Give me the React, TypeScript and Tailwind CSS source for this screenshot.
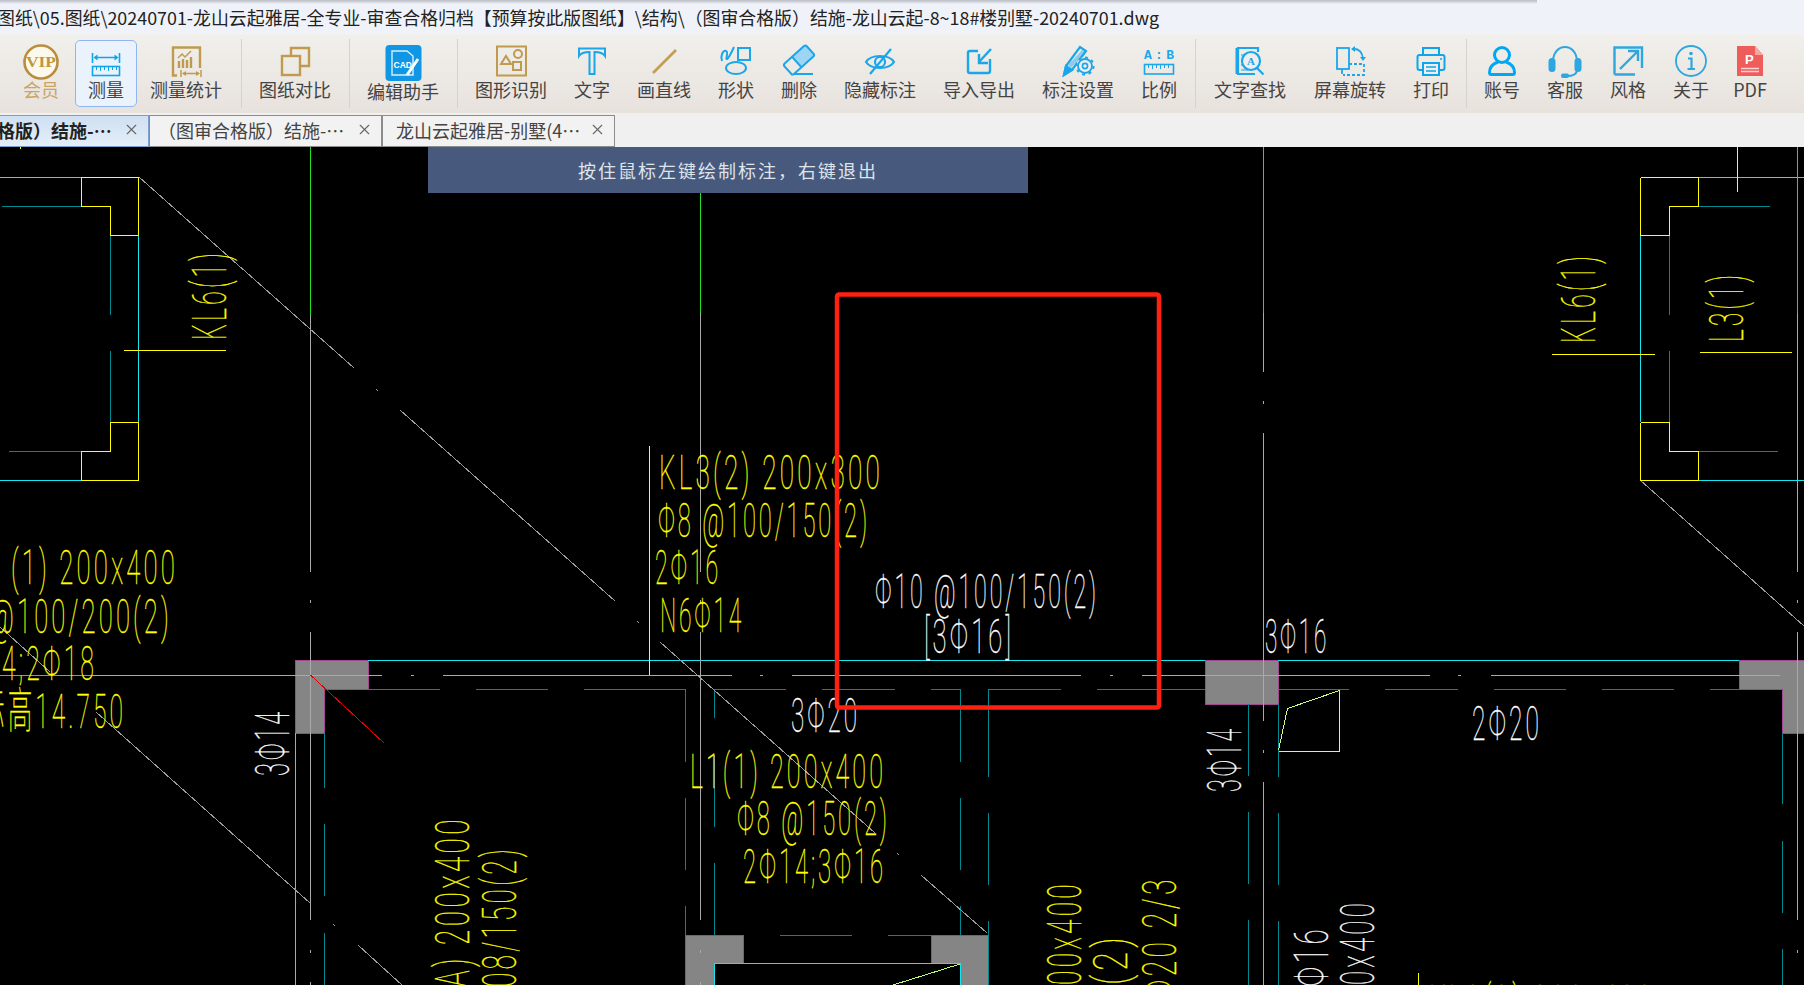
import React from "react";
import { X } from "lucide-react";

const GOLD = "#bf9a4f";
const BLUE = "#1ba6ea";
const CJK = "font-['Noto_Sans_CJK_SC','Liberation_Sans',sans-serif]";

function Icon({ children }: { children: React.ReactNode }) {
  return (
    <svg width="40" height="40" viewBox="0 0 40 40" fill="none" className="shrink-0">
      {children}
    </svg>
  );
}

const icons: Record<string, React.ReactNode> = {
  vip: (
    <>
      <circle cx="20" cy="21" r="16.5" stroke="#b98d3c" strokeWidth="2.6" fill="#fdf8ec" />
      <text x="20" y="26" textAnchor="middle" textLength="30" lengthAdjust="spacingAndGlyphs" fontFamily="Liberation Serif" fontWeight="700" fontSize="15" fill="#c0963e">VIP</text>
    </>
  ),
  measure: (
    <g stroke="#0fa5ea" strokeWidth="1.6">
      <path d="M6.5 12V22M33.5 12V22M9 16.5H31" />
      <path d="M7.5 16.5l4-3v6zM32.5 16.5l-4-3v6z" fill="#0fa5ea" stroke="none" />
      <rect x="6.5" y="25.5" width="27" height="9" />
      <path d="M10.5 26v3M14.5 26v4M18.5 26v3M22.5 26v4M26.5 26v3M30.5 26v3" strokeWidth="1" />
    </g>
  ),
  stats: (
    <g stroke={GOLD}>
      <path d="M34 27V6.5H7V34.5H11" strokeWidth="2.4" />
      <path d="M12 17l4-4 3 3 6-6" strokeWidth="1.5" />
      <path d="M13 20v7M17 18v9M21 19v8M25 16v11" strokeWidth="2.4" />
      <path d="M15 29v7M35 29v7M17 32.5H33" strokeWidth="1.5" />
      <path d="M16 32.5l4-2.5v5zM34 32.5l-4-2.5v5z" fill={GOLD} stroke="none" />
    </g>
  ),
  compare: (
    <g stroke={GOLD} strokeWidth="2.4">
      <path d="M16 14V7H34V25H25" />
      <rect x="7" y="15" width="18" height="19" />
    </g>
  ),
  cad: (
    <>
      <rect x="2.5" y="4" width="36" height="36" rx="4" fill="#0f97e6" />
      <path d="M9 10H24L30 15V34H9Z" stroke="#d9effc" strokeWidth="1.4" />
      <text x="10.5" y="27" fontFamily="Liberation Sans" fontWeight="700" fontSize="8.5" fill="#fff">CAD</text>
      <path d="M24 34L35 18" stroke="#fff" strokeWidth="3" />
    </>
  ),
  shapes: (
    <g stroke={GOLD} strokeWidth="2">
      <rect x="6" y="5.5" width="29" height="29" />
      <path d="M10 23l5-8 5 8z" />
      <circle cx="27" cy="13" r="4" />
      <rect x="22" y="21" width="8" height="8" />
    </g>
  ),
  text: <path d="M7 15V7.5H33V15C31 12 27 11 22.5 11V33H17.5V11C13 11 9 12 7 15Z" stroke={BLUE} strokeWidth="2" />,
  line: <path d="M9 32L32 9" stroke="#c29d52" strokeWidth="2.6" />,
  shape: (
    <g stroke={BLUE} strokeWidth="2">
      <ellipse cx="20" cy="27" rx="10" ry="6" />
      <rect x="22" y="7" width="12" height="12" />
      <path d="M6 20c-2-5 1-11 4-10s-1 9 1 8 7-12 7-12" />
    </g>
  ),
  eraser: (
    <g stroke={BLUE} strokeWidth="2">
      <g transform="rotate(-42 20 19)">
        <rect x="17" y="12" width="18" height="14" fill="#9ed5f4" stroke="none" />
        <rect x="5" y="12" width="30" height="14" rx="2" />
        <path d="M17 12V26" />
      </g>
      <path d="M15 33H34" />
    </g>
  ),
  eye: (
    <g stroke={BLUE} strokeWidth="2.2">
      <path d="M6 21C11 13 29 13 34 21C29 29 11 29 6 21Z" />
      <circle cx="20" cy="21" r="5" />
      <path d="M10 33L31 8" />
    </g>
  ),
  io: (
    <g stroke={BLUE} strokeWidth="2.4">
      <path d="M19 10H11a2 2 0 0 0-2 2V30a2 2 0 0 0 2 2H29a2 2 0 0 0 2-2V18" />
      <path d="M32 8L20 21M20 13V22H29" />
    </g>
  ),
  pen: (
    <g stroke={BLUE} strokeWidth="2.2">
      <path d="M6 34l2-9L22 6l6 4L14 29Z" />
      <path d="M6 34l2-9 6 4Z" fill={BLUE} />
      <path d="M10 24L24 9l3 2L13 27Z" fill={BLUE} stroke="none" opacity="0.45" />
      <circle cx="27" cy="25" r="9" fill="#eee" stroke="none" />
      <circle cx="27" cy="25" r="7" strokeWidth="1.8" />
      <circle cx="27" cy="25" r="8.6" strokeWidth="2" strokeDasharray="3 3.7" />
      <circle cx="27" cy="25" r="2.6" strokeWidth="1.6" />
    </g>
  ),
  ratio: (
    <g>
      <text x="20" y="18" textAnchor="middle" textLength="30" lengthAdjust="spacing" fontFamily="Liberation Mono" fontWeight="700" fontSize="13" fill={BLUE}>A:B</text>
      <rect x="5.5" y="23.5" width="29" height="9.5" stroke={BLUE} strokeWidth="1.6" />
      <path d="M9.5 24v3M13.5 24v4M17.5 24v3M21.5 24v4M25.5 24v3M29.5 24v3" stroke={BLUE} />
    </g>
  ),
  find: (
    <g stroke={BLUE} strokeWidth="2.2">
      <path d="M28 11V7H8V33H25" />
      <path d="M7 7V33" strokeWidth="3" />
      <circle cx="21" cy="20" r="9" fill="#eee" />
      <path d="M27 27l6.500 6.500" />
      <path d="M11 14h3M11 19h2M11 24h2M11 29h8" strokeWidth="1.2" />
      <text x="21" y="24" textAnchor="middle" fontFamily="Liberation Serif" fontWeight="700" fontSize="11" fill={BLUE} stroke="none">A</text>
    </g>
  ),
  rotate: (
    <g stroke={BLUE} strokeWidth="1.8">
      <rect x="7" y="7" width="12" height="21" />
      <path d="M12 28v5" />
      <path d="M19 23H34V34H13" strokeDasharray="3 2" />
      <path d="M24 8C29 8 32 11 33 17" />
      <path d="M21 8l4-3v6zM33 20l-3-4h6z" fill={BLUE} stroke="none" />
    </g>
  ),
  print: (
    <g stroke="#0fa5ea" strokeWidth="2">
      <path d="M12 14V7H28V14" />
      <rect x="6.500" y="14" width="27" height="15" rx="2" />
      <rect x="12" y="22" width="16" height="12" fill="#eee" />
      <path d="M15 26H25M15 30H25" strokeWidth="1.4" />
      <circle cx="30" cy="18" r="1" fill="#0fa5ea" stroke="none" />
    </g>
  ),
  user: (
    <g stroke="#00a8f4" strokeWidth="3">
      <circle cx="20" cy="14" r="7.500" />
      <path d="M16 21C10 23 7.500 27 7.500 31.500C7.500 33 8.500 33.500 9.500 33.500H30.500C31.500 33.500 32.500 33 32.500 31.500C32.500 27 30 23 24 21" />
    </g>
  ),
  headset: (
    <g stroke="#2ea6e0" strokeWidth="2">
      <path d="M8 21C8 1 32 1 32 21" />
      <rect x="4.500" y="18" width="5" height="12" rx="2.500" fill="#2ea6e0" />
      <rect x="30.500" y="18" width="5" height="12" rx="2.500" fill="#2ea6e0" />
      <path d="M32 30C31 34 27 35 22 35" />
      <rect x="17" y="33.500" width="6" height="2.500" rx="1" fill="#2ea6e0" />
    </g>
  ),
  style: (
    <g stroke="#2ea6e0" strokeWidth="2.400">
      <path d="M6.500 33.500V6.500H34V27M6.500 33.500H27" />
      <path d="M12 28L30 10M20 10H30V20" />
    </g>
  ),
  info: (
    <g stroke="#2ea6e0" strokeWidth="1.800">
      <circle cx="20" cy="20" r="15" />
      <circle cx="20" cy="12.500" r="1.800" fill="#2ea6e0" stroke="none" />
      <path d="M17 17.500h3.500v10M16.500 28h7.500" strokeWidth="2.200" />
    </g>
  ),
  pdf: (
    <>
      <path d="M7 5H25L33 14V35H7Z" fill="#ee5c5c" />
      <path d="M25 5L33 14H25Z" fill="#f6a5a5" />
      <text x="15" y="23" fontFamily="Liberation Sans" fontWeight="700" fontSize="13" fill="#fff">P</text>
      <path d="M11 27.500H29M11 30.500H29" stroke="#fbd0d0" strokeWidth="1.400" />
    </>
  ),
};

type Tool = { icon: string; label: string; width: string; sepAfter?: boolean; gapAfter?: string };

const tools: Tool[] = [
  { icon: "vip", label: "会员", width: "w-[68px]" },
  { icon: "measure", label: "测量", width: "w-[62px]" },
  { icon: "stats", label: "测量统计", width: "w-[98px]", gapAfter: "mr-[6px]", sepAfter: true },
  { icon: "compare", label: "图纸对比", width: "w-[106px]", gapAfter: "mr-[1px]", sepAfter: true },
  { icon: "cad", label: "编辑助手", width: "w-[106px]", gapAfter: "mr-[1px]", sepAfter: true },
  { icon: "shapes", label: "图形识别", width: "w-[106px]" },
  { icon: "text", label: "文字", width: "w-[56px]" },
  { icon: "line", label: "画直线", width: "w-[88px]" },
  { icon: "shape", label: "形状", width: "w-[56px]" },
  { icon: "eraser", label: "删除", width: "w-[70px]" },
  { icon: "eye", label: "隐藏标注", width: "w-[92px]" },
  { icon: "io", label: "导入导出", width: "w-[106px]" },
  { icon: "pen", label: "标注设置", width: "w-[92px]" },
  { icon: "ratio", label: "比例", width: "w-[70px]", gapAfter: "mr-[1px]", sepAfter: true },
  { icon: "find", label: "文字查找", width: "w-[108px]" },
  { icon: "rotate", label: "屏幕旋转", width: "w-[92px]" },
  { icon: "print", label: "打印", width: "w-[70px]", sepAfter: true },
  { icon: "user", label: "账号", width: "w-[70px]" },
  { icon: "headset", label: "客服", width: "w-[56px]" },
  { icon: "style", label: "风格", width: "w-[70px]" },
  { icon: "info", label: "关于", width: "w-[56px]" },
  { icon: "pdf", label: "PDF", width: "w-[62px]" },
];

function ToolButton({ tool }: { tool: Tool }) {
  const active = tool.icon === "measure";
  const vip = tool.icon === "vip";
  return (
    <>
      <div
        className={`${tool.width} ${tool.gapAfter ?? ""} h-[67px] flex flex-col items-center shrink-0 rounded-[5px] border ${
          active ? "border-[#8fb6f2] bg-[#eaf2fb]" : "border-transparent"
        }`}
      >
        <Icon>{icons[tool.icon]}</Icon>
        <span
          className={`text-[18px] leading-[20px] whitespace-nowrap ${tool.icon === "cad" ? "mt-0" : "-mt-[2px]"} ${
            vip ? "text-[#c9a464]" : "text-[#444]"
          }`}
        >
          {tool.label}
        </span>
      </div>
      {tool.sepAfter && <div className="w-px h-[69px] bg-[#d6d3cf] shrink-0" />}
    </>
  );
}

function Tab({ label, active, extra }: { label: string; active?: boolean; extra: string }) {
  return (
    <div
      className={`w-[233px] h-[32px] shrink-0 flex items-center pr-[8px] pb-[3px] border ${extra} ${
        active
          ? "border-[#7d9fcb] bg-gradient-to-b from-[#cfe0f2] to-[#e4eef8] font-bold text-[#222]"
          : "border-[#8c8c8c] bg-[#f2f2f2] text-[#444]"
      }`}
    >
      <span className="text-[18px] leading-none whitespace-nowrap flex-1">{label}</span>
      <X size={17} strokeWidth={1.6} className="text-[#666]" />
    </div>
  );
}

function CadText({
  x,
  y,
  len,
  text,
  fill = "#ffff00",
  rot,
}: {
  x: number;
  y: number;
  len: number;
  text: string;
  fill?: string;
  rot?: boolean;
}) {
  return (
    <text
      x={x}
      y={y}
      fontSize="49"
      fontWeight="100"
      fontFamily="Roboto, 'Noto Sans CJK SC', sans-serif"
      fill={fill}
      stroke={fill}
      strokeWidth="0.35"
      letterSpacing="6"
      textLength={len + 4}
      lengthAdjust="spacingAndGlyphs"
      transform={rot ? `rotate(-90 ${x} ${y})` : undefined}
    >
      {text}
    </text>
  );
}

const GRAY = "#a9a9a9";
const DIAG = "#9c9c9c";
const CYAN = "#14e6f0";
const TEAL = "#008a8f";
const YEL = "#ffff00";
const WHITE = "#ffffff";

const grayPath =
  "M310.5 315V572M310.500 600v3M310.5 632V920M310.5 950v3M310.5 982V985" +
  "M700.5 313V572M700.5 600v3M700.5 632V920M700.5 950v3M700.5 982V985" +
  "M1263.5 313V372M1263.5 401v3M1263.5 433V721M1263.5 750v3M1263.5 782V985" +
  "M1797.5 313V572M1797.5 600v3M1797.5 632V920M1797.5 950v3" +
  "M92 675.5H382M411 675.5h3M443 675.5H732M760 675.5h3M792 675.5H1081M1110 675.5h3M1142 675.5H1430M1458 675.5h3M1491 675.5H1780";

const diagPath =
  "M139 177L354 368M376 389l2 2M400 410L615 601M637 621l2 2M660 642L875 833M897 853l2 2M921 875L987 933" +
  "M0 627L50 672M96 712L310 903M333 924l2 2M358 945L402 985" +
  "M1640 480L1804 626";

const greenPath = "M310.5 147V315M700.5 193V313M1263.5 147V313M1797.5 147V313M0 675.5H92";

const cyanPath =
  "M0 177.5H81M0 480.5H81M138.5 235V422M1698 177.5H1804M1698 480.5H1804M1640.5 235V422" +
  "M368 660.5H1205M1278 660.5H1739M295.5 733V985M714.5 963.5H960.5M714.5 963V985M960.5 963V985";

const tealPath =
  "M2 206.5H81M9 451.5H81M110.5 235V315M110.5 351V422M1698 206.5H1770M1698 451.5H1778M1669.5 235V315M1669.5 351V422" +
  "M368 689.5H440M476 689.5H548M584 689.5H685.5M714 689.5H786M822 689.5H895M931 689.5H960.5M988 689.5H1061M1097 689.5H1205M1278 689.5H1349M1385 689.5H1458M1494 689.5H1566M1602 689.5H1674M1710 689.5H1739" +
  "M324.5 733V788M324.5 824V896M324.5 933V985" +
  "M685.5 689V762M685.5 798V870M685.5 906V935M714.5 689V718M714.5 755V827M714.5 863V935" +
  "M960.5 689V762M960.5 798V870M960.5 906V935M988.5 689V777M988.5 813V885M988.5 921V985" +
  "M780 935.5H852M888 935.5H931" +
  "M1248.5 704V776M1248.5 812V884M1248.5 920V985M1278.5 704V777M1278.5 813V885M1278.5 921V985" +
  "M1782.5 733V804M1782.5 841V913M1782.5 949V985";

const yellowPath =
  "M81 177.5H138.500V235.500H110.500V206.500H81.500V177M138.500 422.500V480.500H81.500V451.500H110.500V422.500H138.500" +
  "M124 350.500H226" +
  "M1640.500 177.500H1698.500V206.500H1669.500V235.500H1640.500V177.500M1640.500 422.500H1669.500V451.500H1698.500V480.500H1640.500V422.500" +
  "M1552 354.500H1655M1700 352.500H1792M1737.500 147V192" +
  "M649.500 446V675M1418.500 973V985M20 147v2";

export default function App() {
  return (
    <div className={`w-[1804px] h-[985px] overflow-hidden flex flex-col relative ${CJK}`}>
      <div className="absolute left-0 top-0 w-[1537px] h-[4px] bg-gradient-to-b from-[#b9bdc3] to-transparent" />
      <div className="h-[34px] shrink-0 bg-[#eff3f9] flex items-center overflow-hidden">
        <span className="text-[17.9px] text-[#222] whitespace-nowrap -ml-[3px]">
          图纸\05.图纸\20240701-龙山云起雅居-全专业-审查合格归档【预算按此版图纸】\结构\（图审合格版）结施-龙山云起-8~18#楼别墅-20240701.dwg
        </span>
      </div>

      <div className="h-[79px] shrink-0 flex items-center pl-[7px] bg-gradient-to-b from-[#f1f0ec] to-[#e8e2dd]">
        {tools.map((t) => (
          <ToolButton key={t.label} tool={t} />
        ))}
      </div>

      <div className="h-[34px] shrink-0 bg-[#f0f0f0] flex items-end">
        <Tab label="（图审合格版）结施-…" active extra="-ml-[84px] pl-[8px]" />
        <Tab label="（图审合格版）结施-…" extra="pl-[8px]" />
        <Tab label="龙山云起雅居-别墅(4…" extra="pl-[13px]" />
      </div>

      <div className="flex-1 bg-black relative overflow-hidden">
        <svg width="1804" height="838" viewBox="0 147 1804 838" fill="none" className="block">
          <g shapeRendering="crispEdges">
            <path d="M295.5 660.5H368.5V689.5H324.5V733.5H295.5Z" fill="#858585" stroke="#a0478f" />
            <path d="M1205.5 660.5H1278.5V704.5H1205.5Z" fill="#858585" stroke="#a0478f" />
            <path d="M1804 660.5H1739.500V689.500H1782.500V733.500H1804" fill="#858585" stroke="#a0478f" />
            <path d="M685.5 985V935.5H743.500V963H714.500V985Z" fill="#858585" stroke="#a0478f" />
            <path d="M988.5 985V935.5H931.500V963H960.500V985Z" fill="#858585" stroke="#a0478f" />
            <path d={tealPath} stroke={TEAL} />
            <path d={cyanPath} stroke={CYAN} />
            <path d={grayPath} stroke={GRAY} />
            <path d={diagPath} stroke={DIAG} />
            <path d={greenPath} stroke="#22e022" />
            <path d={yellowPath} stroke={YEL} />
            <path d="M310.5 675L384 743" stroke="#e80000" />
            <path d="M1278.5 750.500L1287.500 708.500L1339.500 690.500V751.500H1278.500" stroke="#ccff77" />
            <path d="M893 985L960 964" stroke="#bbff77" />
          </g>

          <CadText rot x={226} y={340} len={86} text="KL6(1)" />
          <CadText rot x={1595} y={343} len={86} text="KL6(1)" />
          <CadText rot x={1743} y={342} len={66} text="L3(1)" />

          <CadText x={659} y={489} len={220} text="KL3(2) 200x300" />
          <CadText x={658} y={537} len={208} text="Φ8 @100/150(2)" />
          <CadText x={655} y={584} len={62} text="2Φ16" />
          <CadText x={660} y={632} len={80} text="N6Φ14" />

          <CadText x={11} y={584} len={163} text="(1) 200x400" />
          <CadText x={-10} y={633} len={178} text="@100/200(2)" />
          <CadText x={2} y={680} len={91} text="4;2Φ18" />
          <CadText x={-20} y={728} len={142} text="标高14.750" />

          <CadText x={690} y={788} len={192} text="L1(1) 200x400" />
          <CadText x={737} y={835} len={149} text="Φ8 @150(2)" />
          <CadText x={743} y={883} len={139} text="2Φ14;3Φ16" />
          <CadText x={1429} y={1019} len={222} text="KL9(2) 200x400" />

          <CadText rot x={469} y={987} len={167} text="A) 200x400" />
          <CadText rot x={516} y={987} len={137} text="08/150(2)" />
          <CadText rot x={1081} y={985} len={100} text="00x400" />
          <CadText rot x={1127} y={985} len={48} text="(2)" />
          <CadText rot x={1176} y={1000} len={120} text="Φ20 2/3" />

          <CadText x={875} y={608} len={220} text="Φ10 @100/150(2)" fill={WHITE} />
          <CadText x={924} y={653} len={86} text="[3Φ16]" fill={WHITE} />
          <CadText x={791} y={732} len={65} text="3Φ20" fill={WHITE} />
          <CadText x={1265} y={653} len={60} text="3Φ16" fill={WHITE} />
          <CadText x={1472} y={740} len={66} text="2Φ20" fill={WHITE} />
          <CadText rot x={289} y={776} len={63} text="3Φ14" fill={WHITE} />
          <CadText rot x={1241} y={792} len={62} text="3Φ14" fill={WHITE} />
          <CadText rot x={1328} y={1005} len={75} text="2Φ16" fill={WHITE} />
          <CadText rot x={1374} y={985} len={81} text="0x400" fill={WHITE} />

          <rect x="837" y="294.500" width="322" height="413" rx="2" stroke="#ff2010" strokeWidth="4.500" />
        </svg>

        <div className="absolute left-[428px] top-0 w-[600px] h-[46px] bg-[#475a7d] flex items-center justify-center text-[18px] tracking-[2px] text-[#dfe3ea]">
          按住鼠标左键绘制标注，右键退出
        </div>
      </div>
    </div>
  );
}
